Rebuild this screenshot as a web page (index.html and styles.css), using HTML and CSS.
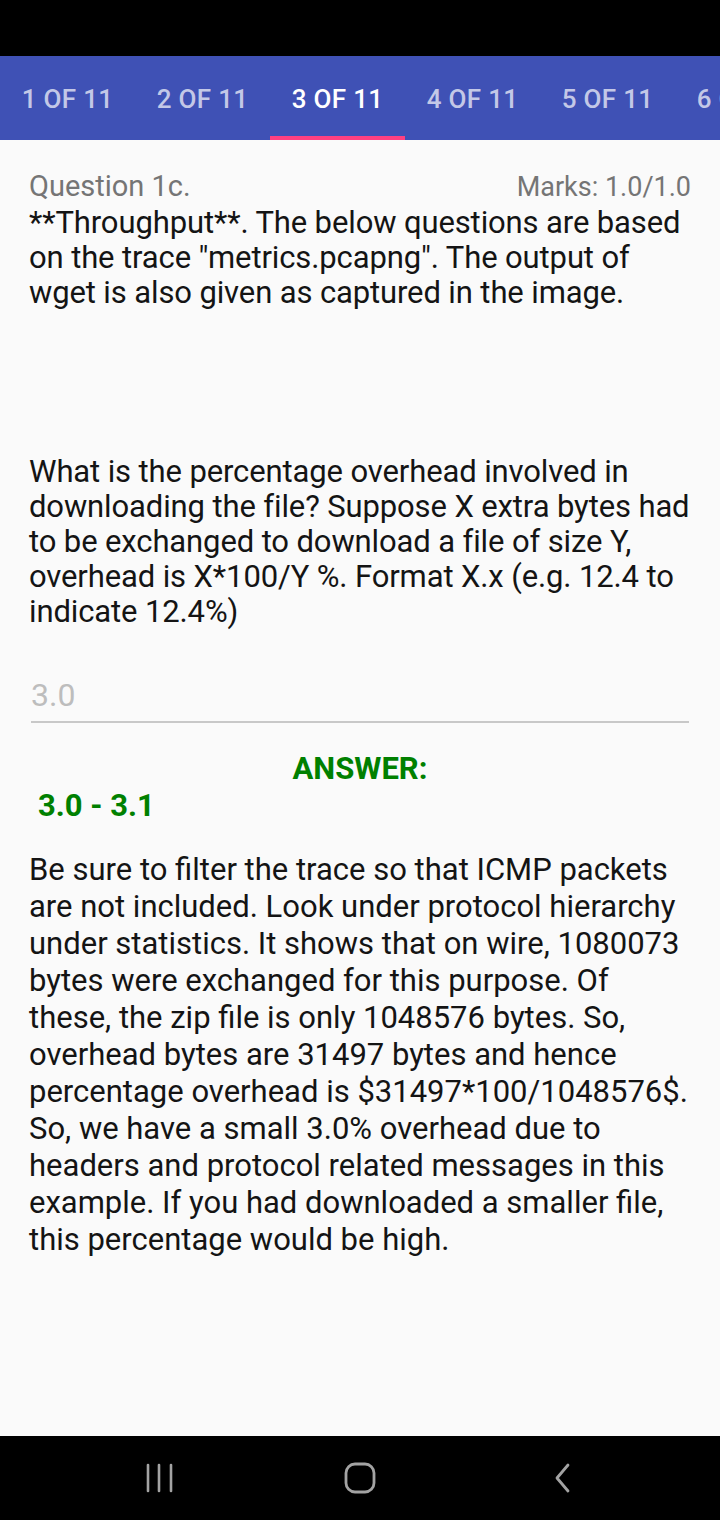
FILE: index.html
```html
<!DOCTYPE html>
<html>
<head>
<meta charset="utf-8">
<link rel="stylesheet" href="styles.css">
</head>
<body>
<div class="screen">
  <div class="status-bar"></div>
  <nav class="tabs">
    <div class="tab">1 OF 11</div>
    <div class="tab">2 OF 11</div>
    <div class="tab active">3 OF 11</div>
    <div class="tab">4 OF 11</div>
    <div class="tab">5 OF 11</div>
    <div class="tab">6 OF 11</div>
  </nav>
  <main class="content">
    <div class="q-header">
      <span class="q-title">Question 1c.</span>
      <span class="q-marks">Marks: 1.0/1.0</span>
    </div>
    <p class="intro">**Throughput**. The below questions are based on the trace "metrics.pcapng". The output of wget is also given as captured in the image.</p>
    <p class="question">What is the percentage overhead involved in downloading the file? Suppose X extra bytes had to be exchanged to download a file of size Y, overhead is X*100/Y %. Format X.x (e.g. 12.4 to indicate 12.4%)</p>
    <div class="input-field">3.0</div>
    <div class="answer-label">ANSWER:</div>
    <div class="answer-value">3.0 - 3.1</div>
    <p class="explanation">Be sure to filter the trace so that ICMP packets are not included. Look under protocol hierarchy under statistics. It shows that on wire, 1080073 bytes were exchanged for this purpose. Of these, the zip file is only 1048576 bytes. So, overhead bytes are 31497 bytes and hence percentage overhead is $31497*100/1048576$. So, we have a small 3.0% overhead due to headers and protocol related messages in this example. If you had downloaded a smaller file, this percentage would be high.</p>
  </main>
  <footer class="nav-bar">
    <div class="nav-slot">
      <svg width="30" height="30" viewBox="0 0 30 30"><g stroke="#a3a3a3" stroke-width="2.6" stroke-linecap="round"><line x1="3" y1="2" x2="3" y2="28"/><line x1="14" y1="2" x2="14" y2="28"/><line x1="26" y1="2" x2="26" y2="28"/></g></svg>
    </div>
    <div class="nav-slot">
      <svg width="32" height="32" viewBox="0 0 32 32"><rect x="2" y="2" width="28" height="28" rx="9" fill="none" stroke="#a3a3a3" stroke-width="2.8"/></svg>
    </div>
    <div class="nav-slot back">
      <svg width="22" height="32" viewBox="0 0 22 32"><polyline points="16,3 5,16 16,29" fill="none" stroke="#a3a3a3" stroke-width="2.8" stroke-linecap="round" stroke-linejoin="round"/></svg>
    </div>
  </footer>
</div>
</body>
</html>
```

FILE: styles.css
```css
* { box-sizing: border-box; }
html, body { margin: 0; padding: 0; }
body {
  font-family: Roboto, "Liberation Sans", sans-serif;
  background: #000;
}
.screen {
  width: 720px;
  height: 1520px;
  display: flex;
  flex-direction: column;
  overflow: hidden;
}
.status-bar {
  height: 56px;
  background: #000;
  flex: none;
}
.tabs {
  height: 84px;
  background: #3f51b5;
  display: flex;
  flex: none;
  overflow: hidden;
}
.tab {
  flex: none;
  width: 135px;
  display: flex;
  align-items: center;
  justify-content: center;
  color: rgba(255,255,255,0.7);
  font-size: 26px;
  font-weight: 500;
  letter-spacing: 0.3px;
  border-bottom: 4px solid transparent;
  padding-top: 6px;
}
.tab.active {
  color: #fff;
  border-bottom-color: #ff4081;
}
.content {
  flex: 1;
  background: #fafafa;
  padding: 30px 29px 0 29px;
}
.q-header {
  display: flex;
  justify-content: space-between;
  align-items: baseline;
  color: #757575;
  line-height: 32px;
}
.q-title {
  font-size: 29px;
}
.q-marks {
  font-size: 27px;
}
.intro, .question {
  margin: 2px 0 0 0;
  font-size: 31px;
  line-height: 35px;
  letter-spacing: -0.12px;
  color: #141414;
}
.question {
  margin-top: 144px;
}
.input-field {
  margin: 46px 2px 0 2px;
  font-size: 32px;
  line-height: 40px;
  color: #bdbdbd;
  padding: 0 0 6px 0;
  border-bottom: 2px solid #c8c8c8;
}
.answer-label {
  margin-top: 28px;
  text-align: center;
  color: #008000;
  font-weight: 700;
  font-size: 31px;
  line-height: 36px;
}
.answer-value {
  margin-left: 9px;
  color: #008000;
  font-weight: 700;
  font-size: 31px;
  line-height: 37px;
}
.explanation {
  margin: 27px 0 0 0;
  font-size: 31px;
  line-height: 37px;
  color: #141414;
}
.nav-bar {
  height: 84px;
  flex: none;
  background: #000;
  display: grid;
  grid-template-columns: 200px 200px 200px;
  justify-content: center;
  align-items: center;
}
.nav-slot {
  display: flex;
  justify-content: center;
  align-items: center;
}
.nav-slot.back {
  padding-left: 6px;
}
```
